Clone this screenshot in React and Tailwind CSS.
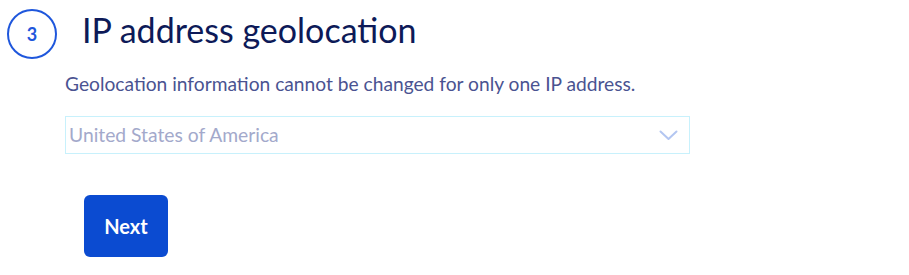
import React from "react";

export default function App() {
  return (
    <div className="w-[909px] h-[275px] bg-white font-['Lato',sans-serif] overflow-hidden">
      <div className="flex items-start pl-[7px] pt-[9px]">
        <div className="w-[50px] h-[50px] rounded-full border-2 border-[#1f57dc] flex items-center justify-center shrink-0">
          <span className="text-[18px] font-bold text-[#1f57dc] leading-none">3</span>
        </div>
        <h1 className="ml-[25px] mt-[1px] text-[34px] leading-[1.2] text-[#0d1a58] font-normal">
          IP address geolocation
        </h1>
      </div>
      <div className="pl-[65px]">
        <p className="mt-[13px] text-[19.2px] leading-[1.2] text-[#4a5391]">
          Geolocation information cannot be changed for only one IP address.
        </p>
        <div className="mt-[21px] w-[625px] h-[38px] border border-[#c8f1fc] flex items-center justify-between pl-[3px] pr-[11px]">
          <span className="text-[19.3px] leading-[1.2] text-[#a3a9cb]">United States of America</span>
          <svg width="19" height="11" viewBox="0 0 19 11" fill="none">
            <path d="M1.5 1.5 L9.5 9 L17.5 1.5" stroke="#b3c6f1" strokeWidth="2" strokeLinecap="round" strokeLinejoin="round" />
          </svg>
        </div>
      </div>
      <div className="pl-[84px] mt-[41px]">
        <button className="w-[84px] h-[62px] rounded-[6px] bg-[#0b4bd1] text-white text-[20px] font-bold flex items-center justify-center">
          Next
        </button>
      </div>
    </div>
  );
}
